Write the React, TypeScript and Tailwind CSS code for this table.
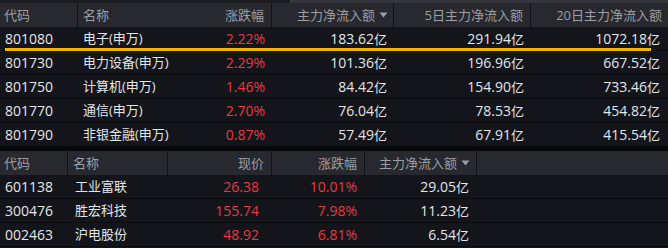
import React from "react";

interface SectorRow {
  code: string;
  name: string;
  change: string;
  netInflow: string;
  netInflow5d: string;
  netInflow20d: string;
}

interface StockRow {
  code: string;
  name: string;
  price: string;
  change: string;
  netInflow: string;
}

const sectorRows: SectorRow[] = [
  { code: "801080", name: "电子(申万)", change: "2.22%", netInflow: "183.62", netInflow5d: "291.94", netInflow20d: "1072.18" },
  { code: "801730", name: "电力设备(申万)", change: "2.29%", netInflow: "101.36", netInflow5d: "196.96", netInflow20d: "667.52" },
  { code: "801750", name: "计算机(申万)", change: "1.46%", netInflow: "84.42", netInflow5d: "154.90", netInflow20d: "733.46" },
  { code: "801770", name: "通信(申万)", change: "2.70%", netInflow: "76.04", netInflow5d: "78.53", netInflow20d: "454.82" },
  { code: "801790", name: "非银金融(申万)", change: "0.87%", netInflow: "57.49", netInflow5d: "67.91", netInflow20d: "415.54" },
];

const stockRows: StockRow[] = [
  { code: "601138", name: "工业富联", price: "26.38", change: "10.01%", netInflow: "29.05" },
  { code: "300476", name: "胜宏科技", price: "155.74", change: "7.98%", netInflow: "11.23" },
  { code: "002463", name: "沪电股份", price: "48.92", change: "6.81%", netInflow: "6.54" },
];

const fontStack = { fontFamily: '"Open Sans", "Noto Sans CJK SC", sans-serif' };

function SortArrow() {
  return (
    <svg width="9" height="6" viewBox="0 0 9 6" className="ml-[4px] shrink-0">
      <path d="M0.5 0.5 L8.5 0.5 L4.5 5.5 Z" fill="#9a9ca3" />
    </svg>
  );
}

function Yi({ value }: { value: string }) {
  return (
    <>
      {value}
      <span className="text-[13px]">亿</span>
    </>
  );
}

export default function App() {
  return (
    <div className="h-[248px] w-[668px] overflow-hidden bg-[#13151a] text-[14px] leading-none text-[#e3e5e9]" style={fontStack}>
      {/* Sector table */}
      <div className="flex h-[3px]">
        <div className="w-[290px] bg-[#1b1c20]" />
        <div className="flex-1 bg-[#34353a]" />
      </div>
      <div className="flex h-[24px] items-center bg-[#28292e] text-[13px] text-[#9c9ea5]">
        <div className="flex h-full w-[78px] items-center border-r border-[#101114] pl-[4px]">代码</div>
        <div className="flex h-full w-[120px] items-center pl-[5px]">名称</div>
        <div className="flex h-full w-[74px] items-center justify-end border-r border-[#101114] pr-[7px]">涨跌幅</div>
        <div className="flex h-full w-[122px] items-center justify-end border-r border-[#101114] pr-[5px]">
          主力净流入额
          <SortArrow />
        </div>
        <div className="flex h-full w-[137px] items-center justify-end border-r border-[#101114] pr-[7px]">5日主力净流入额</div>
        <div className="flex h-full flex-1 items-center justify-end pr-[6px]">20日主力净流入额</div>
      </div>
      {sectorRows.map((row, rowIndex) => (
        <div key={row.code} className="relative flex h-[24px] items-center border-b border-[#0b0c0f]">
          <div className="w-[78px] pl-[5px]">{row.code}</div>
          <div className="w-[120px] pl-[5px] text-[13px]">{row.name}</div>
          <div className="w-[74px] pr-[7px] text-right text-[#f2343c]">{row.change}</div>
          <div className="w-[122px] pr-[7px] text-right"><Yi value={row.netInflow} /></div>
          <div className="w-[137px] pr-[7px] text-right"><Yi value={row.netInflow5d} /></div>
          <div className="flex-1 pr-[8px] text-right"><Yi value={row.netInflow20d} /></div>
          {rowIndex === 0 && (
            <div className="absolute bottom-[-1px] left-[5px] h-[3px] w-[646px] bg-[#f5b400]" />
          )}
        </div>
      ))}
      <div className="h-[4px] bg-[#08090b]" />

      {/* Stock table */}
      <div className="flex h-[24px] items-center bg-[#28292e] text-[13px] text-[#9c9ea5]">
        <div className="flex h-full w-[68px] items-center border-r border-[#101114] pl-[4px]">代码</div>
        <div className="flex h-full w-[100px] items-center border-r border-[#101114] pl-[5px]">名称</div>
        <div className="flex h-full w-[104px] items-center justify-end border-r border-[#101114] pr-[7px]">现价</div>
        <div className="flex h-full w-[93px] items-center justify-end border-r border-[#101114] pr-[7px]">涨跌幅</div>
        <div className="flex h-full w-[112px] items-center justify-end border-r border-[#101114] pr-[6px]">
          主力净流入额
          <SortArrow />
        </div>
        <div className="h-full flex-1" />
      </div>
      {stockRows.map((row) => (
        <div key={row.code} className="flex h-[24px] items-center border-b border-[#0b0c0f]">
          <div className="w-[68px] pl-[5px]">{row.code}</div>
          <div className="w-[100px] pl-[7px] text-[13px]">{row.name}</div>
          <div className="w-[104px] pr-[13px] text-right text-[#f2343c]">{row.price}</div>
          <div className="w-[93px] pr-[8px] text-right text-[#f2343c]">{row.change}</div>
          <div className="w-[112px] pr-[8px] text-right"><Yi value={row.netInflow} /></div>
          <div className="flex-1" />
        </div>
      ))}
    </div>
  );
}
